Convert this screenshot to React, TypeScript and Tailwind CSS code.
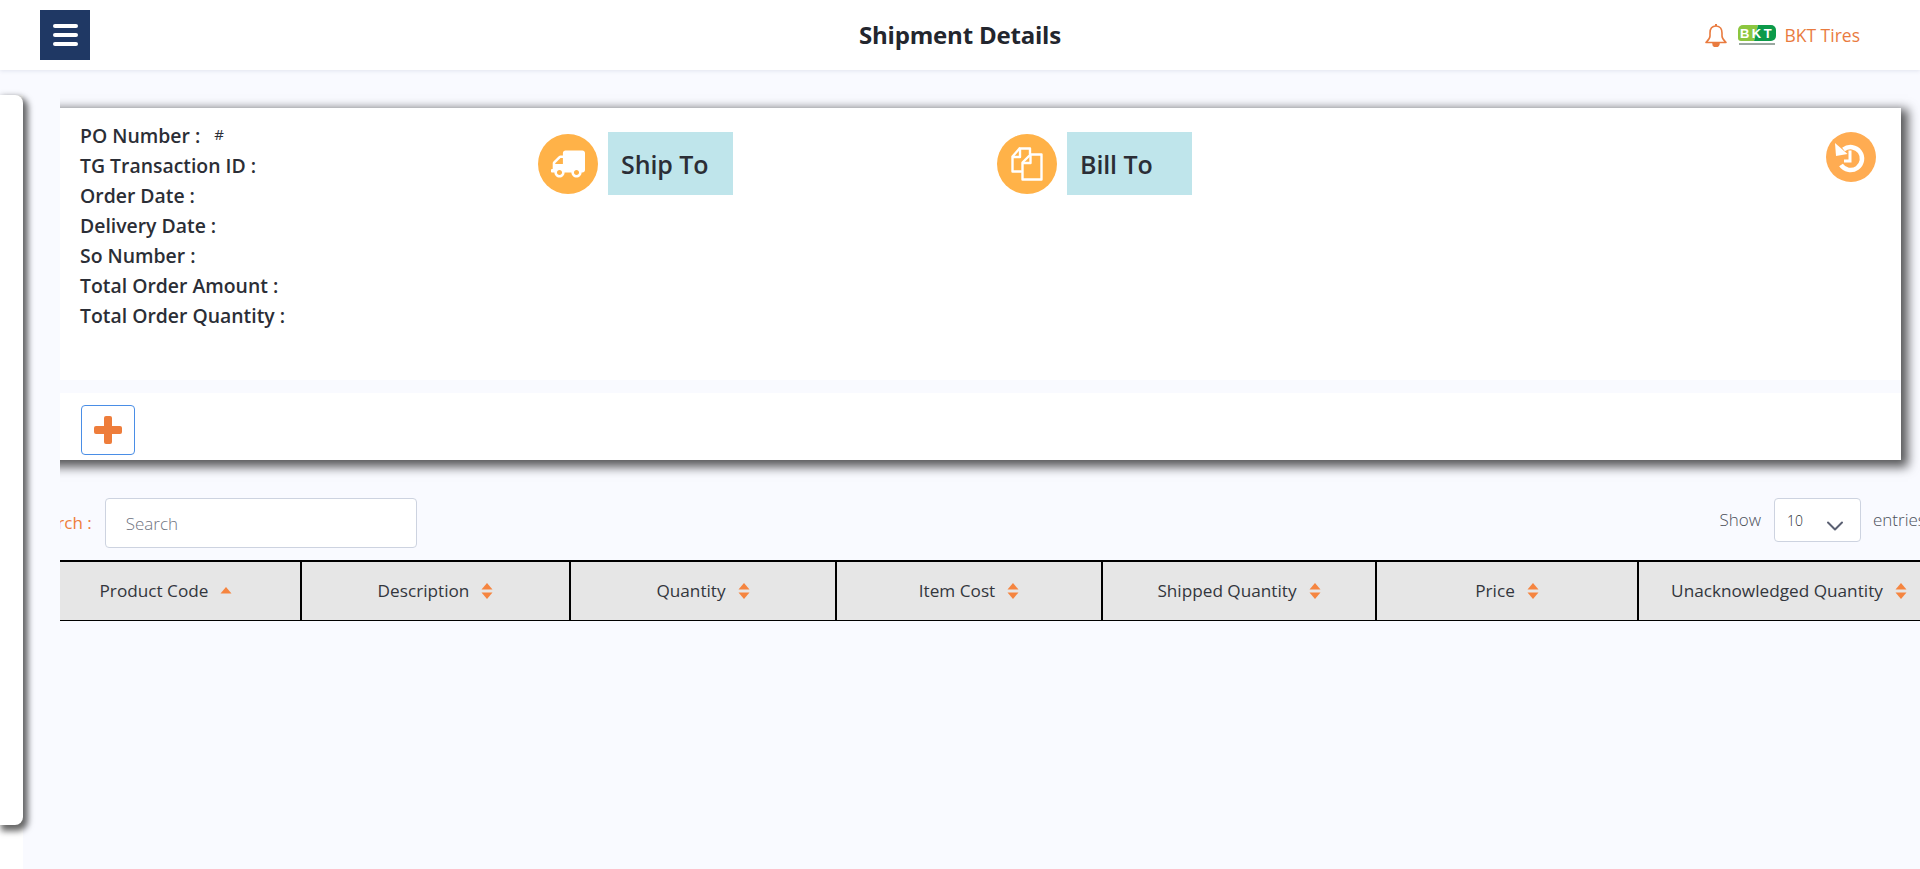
import React from "react";
import { FaTruck } from "react-icons/fa";
import { ChevronDown } from "lucide-react";

const columns = [
  { label: "Product Code", width: "w-[270px]", sorted: true },
  { label: "Description", width: "w-[269px]" },
  { label: "Quantity", width: "w-[266px]" },
  { label: "Item Cost", width: "w-[266px]" },
  { label: "Shipped Quantity", width: "w-[274px]" },
  { label: "Price", width: "w-[262px]" },
  { label: "Unacknowledged Quantity", width: "w-[300px]" },
];

const orderFields = [
  "PO Number :",
  "TG Transaction ID :",
  "Order Date :",
  "Delivery Date :",
  "So Number :",
  "Total Order Amount :",
  "Total Order Quantity :",
];

const SortIcon = ({ sorted }: { sorted?: boolean }) => (
  <svg width="12" height="16" viewBox="0 0 12 16" className="shrink-0">
    {!sorted && <path d="M6 16 0.500 9.500h11z" fill="#f58540" />}
    <path d="M6 0 11.500 6.500H0.500z" fill="#f58540" transform={sorted ? "translate(0 4)" : undefined} />
  </svg>
);

const CopyIcon = () => (
  <svg width="32" height="34" viewBox="0 0 32 34" fill="none" stroke="white" strokeWidth="2.400" strokeLinejoin="round" strokeLinecap="round">
    <path d="M8.500 1.500H19V7M8.500 1.500 1.500 9.500V24.500H10" />
    <path d="M9 2.500V10H2" />
    <path d="M19.500 7.500H30.500V32.500H11.500V15.500z" />
    <path d="M19.500 8.500V16H12.500" />
  </svg>
);

const HistoryIcon = () => (
  <svg width="50" height="50" viewBox="0 0 50 50" fill="none">
    <path d="M17.500 17.500A11.500 11.500 0 1 1 15 33" stroke="white" strokeWidth="4.500" />
    <path d="M9 11 10 24 21.500 22z" fill="white" />
    <path d="M24 18.500V29H18" stroke="white" strokeWidth="3" />
  </svg>
);

const BellIcon = () => (
  <svg width="22" height="24" viewBox="0 0 22 24" fill="none" stroke="#e97b3f" strokeWidth="1.600" strokeLinejoin="round">
    <path d="M11 3C6.500 3 5 6.500 5 10V13C5 16 2.500 18 1 19.500H21C19.500 18 17 16 17 13V10C17 6.500 15.500 3 11 3Z" />
    <path d="M11 3V1" strokeWidth="2" />
    <path d="M8 20.500a3 3 0 0 0 6 0z" fill="#e97b3f" />
  </svg>
);

const PlusIcon = () => (
  <svg width="28" height="28" viewBox="0 0 28 28" fill="#ee7d3b">
    <rect x="10" y="0" width="8" height="28" rx="2" />
    <rect x="0" y="10" width="28" height="8" rx="2" />
  </svg>
);

const BktLogo = () => (
  <div className="flex w-[38px] flex-col items-center">
    <svg width="38" height="16" viewBox="0 0 38 16">
      <path d="M5 0H20L16 16H3A3 3 0 0 1 0 13V5A5 5 0 0 1 5 0Z" fill="#8cc63f" />
      <path d="M20 0H33A5 5 0 0 1 38 5V11A5 5 0 0 1 33 16H16Z" fill="#0c9a4a" />
      <text x="19" y="13" textAnchor="middle" fontFamily="Liberation Sans, sans-serif" fontSize="13" fontWeight="700" fill="white" letterSpacing="2.500">
        BKT
      </text>
    </svg>
    <div className="mt-[2px] h-[2px] w-[36px] bg-[#9aa8a0]" />
  </div>
);

const AddressHeading = ({ icon, label }: { icon: React.ReactNode; label: string }) => (
  <div className="flex items-center gap-[10px]">
    <div className="flex h-[60px] w-[60px] items-center justify-center rounded-full bg-[#ffb248]">{icon}</div>
    <div className="flex h-[63px] w-[125px] items-center bg-[#bfe5eb] pl-[13px] pt-[2px] text-[25px] font-semibold tracking-[-0.1px] text-[#2b2e36]">
      {label}
    </div>
  </div>
);

const App: React.FC = () => {
  return (
    <div className="flex h-screen flex-col overflow-hidden bg-[#f9faff] font-['Open_Sans','Noto_Sans',sans-serif] text-[#2b2e36]">
      {/* Top bar */}
      <header className="relative z-20 grid h-[70px] shrink-0 grid-cols-[1fr_auto_1fr] items-center bg-white px-[40px] shadow-[0_1px_4px_rgba(60,70,120,0.12)]">
        <button className="flex h-[50px] w-[50px] flex-col items-center justify-center gap-[5px] bg-[#1f3864]">
          <span className="h-[4px] w-[25px] rounded-full bg-white" />
          <span className="h-[4px] w-[25px] rounded-full bg-white" />
          <span className="h-[4px] w-[25px] rounded-full bg-white" />
        </button>
        <h1 className="text-center text-[24px] font-bold tracking-[-0.2px] text-[#23262e]">Shipment Details</h1>
        <div className="flex items-center justify-end pr-[20px]">
          <BellIcon />
          <div className="ml-[11px]">
            <BktLogo />
          </div>
          <span className="ml-[8px] text-[17.500px] text-[#e97b3f]">BKT Tires</span>
        </div>
      </header>

      <div className="flex min-h-0 flex-1">
        {/* Collapsed side panel */}
        <aside className="relative z-10 h-full w-[23px] shrink-0 border-t-[25px] border-[#f9faff] bg-white">
          <div className="h-[730px] w-[23px] rounded-br-[8px] rounded-tr-[8px] bg-white shadow-[3px_4px_6px_2px_rgba(0,0,0,0.6)]" />
        </aside>

        <main className="ml-[37px] min-w-0 flex-1 overflow-hidden pt-[38px]">
          <div className="-ml-[28px] w-[1900px]">
            <section className="w-[1869px] bg-[#f9faff] shadow-[4px_4px_10px_3px_rgba(0,0,0,0.65)]">
              <div className="flex h-[272px] bg-white pl-[48px] pr-[25px] pt-[13px]">
                <div className="w-[458px]">
                  {orderFields.map((field, i) => (
                    <div key={field} className="flex h-[30px] items-center text-[19.400px] font-semibold text-[#2b2e36]">
                      {field}
                      {i === 0 && <span className="ml-[14px] -mt-[4px] text-[15px] font-normal">#</span>}
                    </div>
                  ))}
                </div>
                <div className="w-[459px] pt-[11px]">
                  <AddressHeading icon={<FaTruck size={34} color="white" className="-scale-x-100" />} label="Ship To" />
                </div>
                <div className="flex-1 pt-[11px]">
                  <AddressHeading icon={<CopyIcon />} label="Bill To" />
                </div>
                <div className="pt-[11px]">
                  <div className="h-[50px] w-[50px] rounded-full bg-[#ffac52]">
                    <HistoryIcon />
                  </div>
                </div>
              </div>
              <div className="mt-[13px] flex h-[67px] items-start bg-white pl-[49px] pt-[12px]">
                <button className="flex h-[50px] w-[54px] items-center justify-center rounded-[4px] border border-[#4a8ee6] bg-white">
                  <PlusIcon />
                </button>
              </div>
            </section>

            <div className="mt-[38px] flex h-[50px] w-[1900px] items-start justify-between">
              <div className="flex items-center">
                <span className="-ml-[3px] text-[17px] font-medium text-[#ee7d3b]">Search :</span>
                <input
                  placeholder="Search"
                  className="ml-[13px] h-[50px] w-[312px] rounded-[4px] border border-[#cdd3e0] bg-white pl-[20px] text-[17px] font-light outline-none placeholder:text-[#6f7480]"
                />
              </div>
              <div className="flex items-center">
                <span className="text-[17px] font-light text-[#4b4f59]">Show</span>
                <div className="ml-[13px] flex h-[44px] w-[87px] items-center justify-between rounded-[4px] border border-[#cdd3e0] bg-white pl-[12px] pr-[11px] text-[14px] font-light">
                  10
                  <ChevronDown size={28} strokeWidth={1.700} className="mt-[11px] text-[#5a6072]" />
                </div>
                <span className="ml-[12px] w-[59px] overflow-hidden text-[17px] font-light text-[#4b4f59]">entries</span>
              </div>
            </div>

            <div className="mt-[12px] flex h-[61px] w-[1907px] border-b border-t-2 border-b-black border-t-black bg-[#e6e6e6]">
              {columns.map((col) => (
                <div
                  key={col.label}
                  className={`flex shrink-0 items-center justify-center gap-[12px] border-r-2 border-black text-[17.200px] text-[#33363d] last:border-r-0 ${col.width}`}
                >
                  {col.label}
                  <SortIcon sorted={col.sorted} />
                </div>
              ))}
            </div>
          </div>
        </main>
      </div>
    </div>
  );
};

export default App;
